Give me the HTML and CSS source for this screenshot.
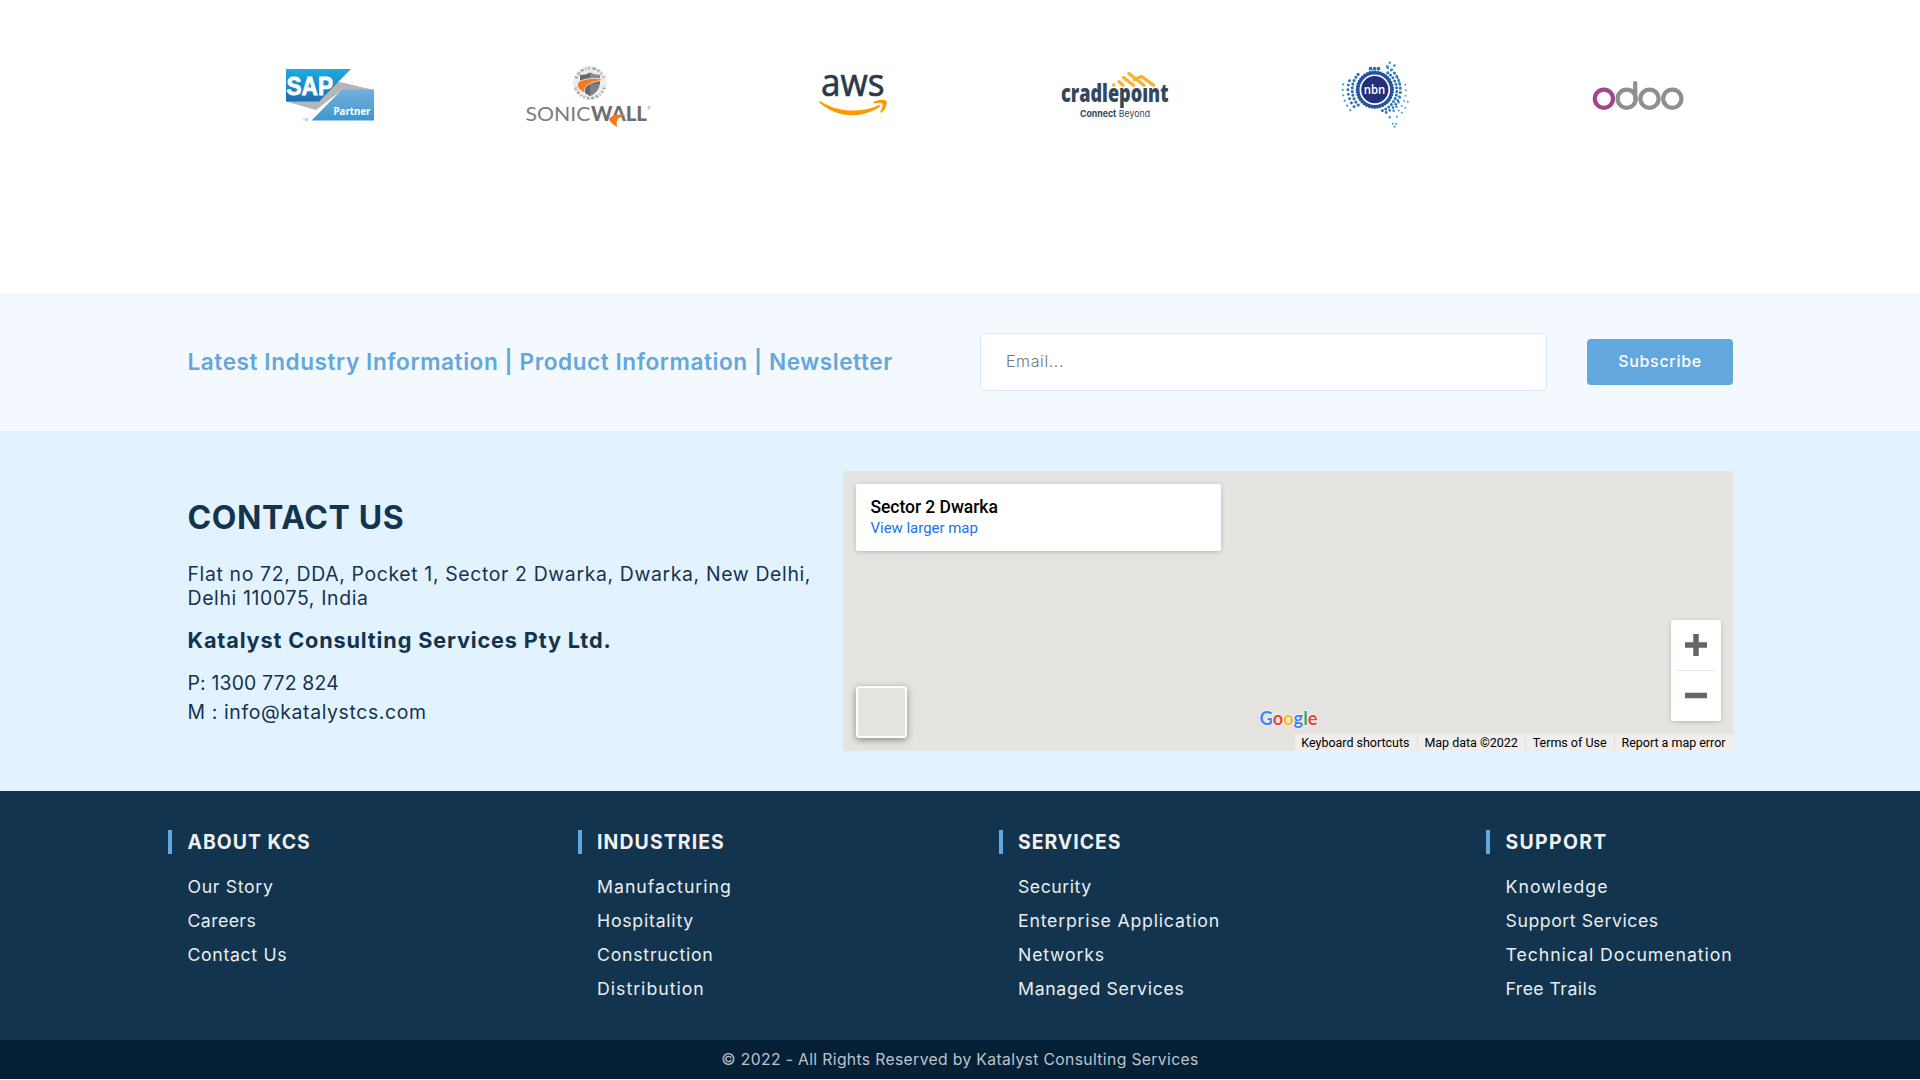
FILE: index.html
```html
<!DOCTYPE html>
<html lang="en">
<head>
<meta charset="utf-8">
<title>Katalyst Consulting Services</title>
<link rel="stylesheet" href="styles.css">
</head>
<body>
<section class="partners">
  <svg class="partner" viewBox="200 50 262 90" role="img" aria-label="SAP Partner">
    <defs>
      <linearGradient id="sapTop" x1="0" y1="0" x2="0" y2="1"><stop offset="0" stop-color="#1fabdf"/><stop offset="1" stop-color="#1a6db6"/></linearGradient>
      <linearGradient id="sapLow" x1="0" y1="0" x2="0" y2="1"><stop offset="0" stop-color="#74b0dc"/><stop offset="1" stop-color="#3f97cf"/></linearGradient>
    </defs>
    <path d="M286 101.5 L316 110 L342 90 L374 90 L340 82 L320 85Z" fill="#b3b6bb"/>
    <path d="M286 69H351L319 101.5H286Z" fill="url(#sapTop)"/>
    <path d="M342 89.5H374V120.500H311.5Z" fill="url(#sapLow)"/>
    <text class="sap" x="286.500" y="95" textLength="46.500" lengthAdjust="spacingAndGlyphs">SAP</text>
    <text class="sap-sub" x="333.5" y="114.500" textLength="37" lengthAdjust="spacingAndGlyphs">Partner</text>
    <text class="tm" x="303" y="121" textLength="5">TM</text>
  </svg>
  <svg class="partner" viewBox="462 50 262 90" role="img" aria-label="SonicWall">
    <circle cx="590" cy="83" r="17" fill="#ededee"/>
    <path id="ringTop" d="M576.500 83a13.500 13.500 0 0 1 27 0" fill="none"/>
    <path id="ringLow" d="M573.500 83a16.500 16.500 0 0 0 33 0" fill="none"/>
    <text class="ring"><textPath href="#ringTop" startOffset="4" textLength="34">SONICWALL</textPath></text>
    <text class="ring"><textPath href="#ringLow" startOffset="5" textLength="42">UNIVERSITY</textPath></text>
    <path d="M580 75Q586 75 590 72.500Q594 75 600 75V83Q599 92 590 96Q581 92 580 83Z" fill="#66676b"/>
    <path d="M590 72.500Q594 75 600 75V79H590Z" fill="#8a8b8f"/>
    <path d="M590 84H599.500Q598 92 590 96Z" fill="#808185"/>
    <path d="M601.500 79C592 77.500 583 79 578.500 82C575.500 86 579 90 584.500 93C583.500 86.500 588 82.500 601.500 80.500Z" fill="#f47a20" stroke="#fff" stroke-width=".7"/>
    <text class="sonic" x="525.500" y="120.500" textLength="65" lengthAdjust="spacingAndGlyphs">SONIC</text>
    <text class="wall" x="591" y="120.500" textLength="56" lengthAdjust="spacingAndGlyphs">WALL</text>
    <path d="M609 119C612.500 114 619 113.500 627 115.500C620 116 615.500 118 617 127C612.500 124 609.500 122 609 119Z" fill="#f47a20"/>
    <circle cx="649" cy="107.500" r="1.100" fill="none" stroke="#888" stroke-width=".6"/>
  </svg>
  <svg class="partner" viewBox="724 50 262 90" role="img" aria-label="AWS">
    <text class="aws" x="821" y="95.500" textLength="63.500" lengthAdjust="spacingAndGlyphs">aws</text>
    <path d="M820 101C838 113 862 113 879 105Q881 104.500 880 106.500C862 119.500 836 118 819.500 102.500Q819 101 820 101Z" fill="#f90"/>
    <path d="M873 102.500C877 99 886 99 886.800 101.500C887 106 885 109.500 881.500 112.500C880.500 113 880 112.500 880.500 111.500C882 108 883 105 882.500 103.500C881 102 877 102.800 874 103.200Z" fill="#f90"/>
  </svg>
  <svg class="partner" viewBox="986 50 262 90" role="img" aria-label="Cradlepoint">
    <g fill="none" stroke="#fbb02d" stroke-width="3.300" stroke-linecap="round" stroke-linejoin="round">
      <path d="M1113.700 85h.2M1119 81.800L1123 85.200M1123.500 77.500L1133.500 85.200M1128.800 73.500L1144 85.200M1134.500 79.500L1141.500 76.500L1153.500 85.200"/>
    </g>
    <text class="cradle" x="1061" y="102.300" textLength="107.500" lengthAdjust="spacingAndGlyphs">cradlepoınt</text>
    <text class="beyond" x="1080" y="116.800" textLength="70" lengthAdjust="spacingAndGlyphs"><tspan font-weight="700">Connect</tspan> Beyond</text>
  </svg>
  <svg class="partner" viewBox="1248 50 262 90" role="img" aria-label="nbn">
    <g transform="translate(1374.800 89.700)">
      <circle r="16.900" fill="none" stroke="#22559c" stroke-width="3.200"/>
      <circle r="18.200" fill="none" stroke="#22559c" stroke-width="2.200" stroke-dasharray="0 2.860" stroke-linecap="round"/>
      <circle r="13.600" fill="#232f7b"/>
      <g fill="none" stroke="#2c70b7" stroke-linecap="round">
        <path d="M-16.700-15.300A22.600 22.600 0 0 0-14 17.700" stroke-width="3.200" stroke-dasharray="0 3.700"/>
        <path d="M-25.300-9A26.800 26.800 0 0 0-19.500 18.500" stroke-width="2.900" stroke-dasharray="0 4.600"/>
        <path d="M-31.600-5.300A32 32 0 0 0-24.300 20.800" stroke="#3f9bdc" stroke-width="2.300" stroke-dasharray="0 5.500"/>
        <path d="M13-17A21.500 21.500 0 0 1 7 21" stroke-width="3" stroke-dasharray="0 3.600"/>
        <path d="M13-22A25.500 25.500 0 0 1 11 23" stroke-width="2.800" stroke-dasharray="0 4.200"/>
        <path d="M17-20A26.500 29 0 0 1 15.500 24.500" stroke="#368cd0" stroke-width="2.500" stroke-dasharray="0 5"/>
        <path d="M30.500-5A31 31 0 0 1 23 22" stroke="#3f9bdc" stroke-width="1.900" stroke-dasharray="0 5.500"/>
        <path d="M-4.300-21h8.200" stroke-width="3.800" stroke-dasharray="0 4"/>
      </g>
      <g fill="#3f9bdc">
        <circle cx="15" cy="-27" r="1.300"/><circle cx="19.600" cy="-24" r="1.400"/><circle cx="12.600" cy="-23" r="1.600"/>
        <circle cx="15" cy="27.500" r="1.300"/><circle cx="22" cy="27" r="1"/><circle cx="18" cy="34" r="1"/><circle cx="21.500" cy="34" r="1"/><circle cx="19.800" cy="37" r="1.100"/>
        <circle cx="27" cy="23" r="1"/><circle cx="30.500" cy="18" r="1"/><circle cx="33" cy="12" r="1"/>
      </g>
      <text class="nbn" x="-11" y="3.800" textLength="21.500" lengthAdjust="spacingAndGlyphs">nbn</text>
    </g>
  </svg>
  <svg class="partner" viewBox="1510 50 262 90" role="img" aria-label="Odoo">
    <g fill="none" stroke="#8f8f8f" stroke-width="4.200" stroke-linecap="round">
      <circle cx="1626.700" cy="98.700" r="9.100"/><circle cx="1649.500" cy="98.700" r="9.100"/><circle cx="1672.300" cy="98.700" r="9.100"/>
      <path d="M1635.200 83V98.700"/>
      <circle cx="1603.900" cy="98.700" r="9.100" stroke="#a24689"/>
    </g>
  </svg>
</section>

<section class="newsletter">
  <h2 class="news-title">Latest Industry Information | Product Information | Newsletter</h2>
  <div class="email">Email...</div>
  <button class="subscribe">Subscribe</button>
</section>

<section class="contact">
  <div class="details">
    <h2 class="contact-title">CONTACT US</h2>
    <p class="address">Flat no 72, DDA, Pocket 1, Sector 2 Dwarka, Dwarka, New Delhi,<br>Delhi 110075, India</p>
    <h3 class="company">Katalyst Consulting Services Pty Ltd.</h3>
    <p class="line phone">P: 1300 772 824</p>
    <p class="line mail">M : info@katalystcs.com</p>
  </div>
  <div class="map">
    <div class="place"><strong>Sector 2 Dwarka</strong><a>View larger map</a></div>
    <div class="thumb"></div>
    <svg class="google" viewBox="0 0 70 34" role="img" aria-label="Google"><text x="5.500" y="20" textLength="58" lengthAdjust="spacingAndGlyphs"><tspan fill="#4285f4">G</tspan><tspan fill="#ea4335">o</tspan><tspan fill="#fbbc05">o</tspan><tspan fill="#4285f4">g</tspan><tspan fill="#34a853">l</tspan><tspan fill="#ea4335">e</tspan></text></svg>
    <div class="zoom">
      <svg viewBox="0 0 50 50"><path d="M14 25h22M25 14v22"/></svg>
      <svg viewBox="0 0 50 50"><path d="M14 25h22"/></svg>
    </div>
    <div class="legal"><span>Keyboard shortcuts</span><span>Map data ©2022</span><span>Terms of Use</span><span>Report a map error</span></div>
  </div>
</section>

<footer class="footer">
  <div class="col about"><h4>ABOUT KCS</h4><a>Our Story</a><a>Careers</a><a>Contact Us</a></div>
  <div class="col industries"><h4>INDUSTRIES</h4><a>Manufacturing</a><a>Hospitality</a><a>Construction</a><a>Distribution</a></div>
  <div class="col services"><h4>SERVICES</h4><a>Security</a><a>Enterprise Application</a><a>Networks</a><a>Managed Services</a></div>
  <div class="col support"><h4>SUPPORT</h4><a>Knowledge</a><a>Support Services</a><a>Technical Documenation</a><a>Free Trails</a></div>
</footer>
<div class="copyright">© 2022 - All Rights Reserved by Katalyst Consulting Services</div>
</body>
</html>
```
FILE: styles.css
```css
* { box-sizing: border-box; margin: 0; padding: 0; }
body { width: 1920px; height: 1080px; overflow: hidden; background: #fff; font-family: "Inter", sans-serif; color: #13344e; }

/* Partner logos */
.partners { height: 293px; padding: 50px 148px 0 200px; display: grid; grid-template-columns: repeat(6, 262px); align-items: start; }
.partner { width: 262px; height: 90px; display: block; }
.sap { font: 700 25.500px "Liberation Sans", sans-serif; fill: #fff; stroke: #fff; stroke-width: .8px; }
.sap-sub { font: 700 10.500px "Open Sans", sans-serif; fill: #fff; }
.tm { font: 3px "Liberation Sans", sans-serif; fill: #777; }
.ring { font: 700 3.800px "Liberation Sans", sans-serif; fill: #707175; }
.sonic { font: 400 20px Lato, sans-serif; fill: #7b7c7f; }
.wall { font: 900 20px Lato, sans-serif; fill: #6d6e71; }
.aws { font: 500 38px "Open Sans", sans-serif; fill: #2b3a48; stroke: #2b3a48; stroke-width: .7px; }
.cradle { font: 800 24px "Open Sans", sans-serif; fill: #33475b; }
.beyond { font: 400 9.200px Inter, sans-serif; fill: #33475b; }
.nbn { font: 600 13px "Open Sans", sans-serif; fill: #fff; }

/* Newsletter */
.newsletter { height: 137.600px; background: #f4f9ff; padding: 0 187px 0 187.500px; display: flex; align-items: center; }
.news-title { flex: 1; font-size: 22.600px; font-weight: 600; color: #62a7de; line-height: 28px; white-space: nowrap; letter-spacing: .56px; }
.email { width: 567px; height: 58px; border: 1.500px solid #d3ebfc; border-radius: 5px; background: #fff; padding: 0 25px; line-height: 55px; font-size: 16px; font-weight: 300; color: #757575; margin-right: 40px; letter-spacing: .6px; }
.subscribe { width: 146px; height: 46px; border: 0; border-radius: 4px; background: #62a7de; color: #fff; font: 500 16px Inter, sans-serif; letter-spacing: .7px; padding-bottom: 1px; }

/* Contact */
.contact { height: 360px; background: #e3f2ff; padding: 40px 187px 0 187.500px; display: flex; justify-content: space-between; }
.details { padding-top: 27px; }
.contact-title { font-size: 32px; font-weight: 700; line-height: 40px; letter-spacing: .6px; }
.address { font-size: 19.400px; line-height: 24px; margin-top: 24px; white-space: nowrap; letter-spacing: .65px; }
.company { font-size: 21.700px; font-weight: 700; line-height: 28px; margin-top: 16px; letter-spacing: .83px; }
.line { font-size: 19.400px; line-height: 29px; }
.phone { margin-top: 15px; letter-spacing: .17px; }
.mail { letter-spacing: .63px; }

.map { position: relative; width: 890px; height: 280px; background: #e4e3df; font-family: Roboto, sans-serif; color: #000; }
.place { position: absolute; left: 13px; top: 13px; width: 365px; height: 67px; background: #fff; border-radius: 2px; box-shadow: 0 1px 5px -1px rgba(0,0,0,.3); padding: 12px 14.500px; }
.place strong { display: block; font-size: 17.500px; font-weight: 500; line-height: 22px; letter-spacing: -.05px; }
.place a { display: block; font-size: 15px; line-height: 21px; color: #1a73e8; letter-spacing: -.03px; }
.thumb { position: absolute; left: 13px; top: 215px; width: 51px; height: 52px; border: 2px solid #fff; border-radius: 4px; box-shadow: 0 2px 7px rgba(0,0,0,.4); }
.google { position: absolute; left: 411px; top: 234px; width: 70px; height: 34px; }
.google text { font: 700 19px Lato, sans-serif; stroke: #fff; stroke-width: 1.500px; stroke-opacity: .7; paint-order: stroke; }
.zoom { position: absolute; left: 828px; top: 149px; width: 50px; height: 101px; background: #fff; border-radius: 2px; box-shadow: 0 1px 5px -1px rgba(0,0,0,.3); }
.zoom svg { display: block; width: 50px; height: 50px; stroke: #666; stroke-width: 5.500px; }
.zoom svg + svg { height: 51px; }
.zoom::after { content: ""; position: absolute; left: 6px; top: 50px; width: 37px; height: 1px; background: #e6e6e6; }
.legal { position: absolute; right: 0; bottom: 0; height: 17px; display: flex; font-size: 12.500px; line-height: 18px; white-space: nowrap; letter-spacing: -.02px; background: #efeeec; }
.legal span { padding: 0 7.500px 0 6.500px; }
.legal span + span { border-left: 1.500px solid #e0dfdc; }

/* Footer */
.footer { height: 249.900px; background: #13344e; display: flex; padding: 39.500px 187px 0 168px; color: #e9edf0; }
.col { display: flex; flex-direction: column; white-space: nowrap; }
.about { width: 409.500px; }
.industries { width: 421px; }
.services { width: 487.500px; }
.col h4 { font-size: 19.400px; font-weight: 700; line-height: 24px; border-left: 4px solid #62a7de; padding-left: 15.500px; margin-bottom: 16px; color: #f0f0f0; letter-spacing: 1px; }
.col a { font-size: 17.700px; line-height: 34px; padding-left: 19.500px; letter-spacing: .66px; }
.col.industries h4 { letter-spacing: 1.120px; }
.col.support h4 { letter-spacing: 1.350px; }
.about a:nth-of-type(2) { letter-spacing: .4px; }
.industries a { letter-spacing: 1px; }
.industries a:nth-of-type(2), .industries a:nth-of-type(3) { letter-spacing: .76px; }
.services a:nth-of-type(1) { letter-spacing: .52px; }
.services a:nth-of-type(2), .services a:nth-of-type(3) { letter-spacing: .8px; }
.support a:nth-of-type(1) { letter-spacing: 1.050px; }
.support a:nth-of-type(2) { letter-spacing: .55px; }
.support a:nth-of-type(3) { letter-spacing: .95px; }
.support a:nth-of-type(4) { letter-spacing: .42px; }
.copyright { height: 38.700px; background: #062137; color: #bcc4ca; font-size: 15.700px; line-height: 40px; text-align: center; letter-spacing: .36px; }
```
